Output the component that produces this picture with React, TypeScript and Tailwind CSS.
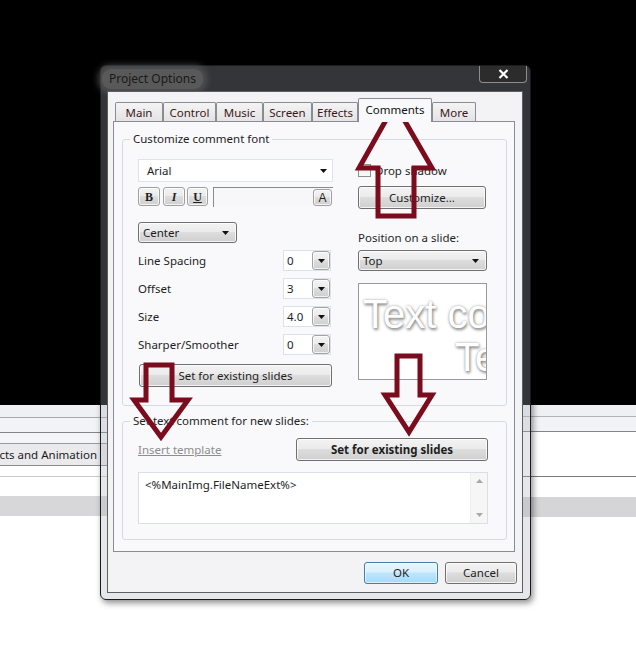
import React from 'react';

const winBtn =
  'rounded-[3px] border border-[#707070] bg-[linear-gradient(#f3f3f3,#ebebeb_45%,#dddddd_50%,#cfcfcf)] shadow-[inset_0_0_0_1px_rgba(255,255,255,0.75)]';

const Caret = () => (
  <svg width="7" height="4" viewBox="0 0 7 4" className="shrink-0">
    <path d="M0 0h7L3.5 4z" fill="#111" />
  </svg>
);

const tabs = [
  { label: 'Main', w: 'w-[48px]' },
  { label: 'Control', w: 'w-[53px]' },
  { label: 'Music', w: 'w-[47px]' },
  { label: 'Screen', w: 'w-[49px]' },
  { label: 'Effects', w: 'w-[46px]' },
  { label: 'Comments', w: 'w-[74px]', active: true },
  { label: 'More', w: 'w-[44px]' },
];

const spinRows = [
  { label: 'Line Spacing', value: '0' },
  { label: 'Offset', value: '3' },
  { label: 'Size', value: '4.0' },
  { label: 'Sharper/Smoother', value: '0' },
];

const SpinCombo = ({ value }: { value: string }) => (
  <div className="flex h-[21px] w-[48px] items-center border border-[#dbe2e8] bg-white pl-[3px]">
    <span className="flex-1">{value}</span>
    <div className={`${winBtn} flex h-[19px] w-[18px] items-center justify-center rounded-[2px] border-[#a3a3a3]`}>
      <Caret />
    </div>
  </div>
);

const Background = () => (
  <div className="flex min-h-[672px] flex-col bg-white">
    <div className="h-[405px] bg-black" />
    <div className="flex flex-1">
      <div className="w-[320px]">
        <div className="h-[13px] border-b border-[#a9a9a9] bg-[#eef0f4]" />
        <div className="h-[15px] border-b border-[#858585] bg-[#f2f3f6]" />
        <div className="h-[11px] border-b border-[#9a9a9a] bg-[#f4f5f8]" />
        <div className="flex h-[22px] items-center justify-end overflow-hidden whitespace-nowrap border-b border-[#8c8c8c] bg-[#eaeaed] pr-[223px] text-[11.5px] text-[#1a1a1a]">
          <span>Effects and Animation</span>
        </div>
        <div className="h-[11px] border-b border-[#c9c9c9]" />
        <div className="h-[19px]" />
        <div className="h-[20px] bg-[#d7d7d9]" />
      </div>
      <div className="flex-1">
        <div className="h-[12px] border-b border-[#b3b3b3] bg-[#eef0f4]" />
        <div className="h-[15px] border-b border-[#858585] bg-[#f2f3f6]" />
        <div className="h-[45px] border-b border-[#7a7a7a]" />
        <div className="h-[20px]" />
        <div className="h-[20px] bg-[#d5d5d7]" />
      </div>
    </div>
  </div>
);

const Arrows = () => (
  <svg
    className="pointer-events-none absolute left-0 top-0"
    width="636"
    height="672"
    viewBox="0 0 636 672"
    fill="none"
    stroke="#7b0c1d"
    strokeWidth="5"
  >
    <polygon points="395,104 432,168 414,168 414,216 378,216 378,168 359,168" />
    <polygon points="146,365 172,365 172,400 188,400 161,437 134,400 146,400" />
    <polygon points="397,356 420,356 420,395 432,395 409,432 385,395 397,395" />
  </svg>
);

const Dialog = () => (
  <div className="absolute left-[100px] top-[65px] flex h-[535px] w-[431px] flex-col rounded-[6px] border border-[#1b1b1b] bg-[rgba(170,175,185,0.3)] shadow-[2px_3px_6px_rgba(0,0,0,0.45)]">
    {/* title bar */}
    <div className="flex h-[25px] items-start justify-between pl-[1px]">
      <div className="mt-[3px] rounded-[9px] bg-[#595959] px-[7px] py-[1px] text-[12px] text-[#1a1a1a] shadow-[0_0_6px_4px_rgba(89,89,89,0.75)]">
        Project Options
      </div>
      <div className="mr-[3px] flex h-[17px] w-[48px] items-center justify-center rounded-b-[4px] border border-t-0 border-[#8d8d8d] bg-[#2c2c2c]">
        <svg width="11" height="10" viewBox="0 0 11 10">
          <path d="M1.5 1l8 8M9.5 1l-8 8" stroke="#fff" strokeWidth="2.2" />
        </svg>
      </div>
    </div>

    {/* client */}
    <div className="mb-[6px] ml-[6px] mr-[7px] flex-1 border border-[#5f5f5f] bg-[#f3f3f5] px-[5px] pt-[7px]">
      <div className="ml-[2px] flex h-[22px] items-end">
        {tabs.map((t) =>
          t.active ? (
            <div
              key={t.label}
              className={`${t.w} relative z-10 -mb-px flex h-[24px] items-start justify-center rounded-t-[2px] border border-b-0 border-[#898c95] bg-[#f9f9fb] pt-[2px] text-[#111]`}
            >
              {t.label}
            </div>
          ) : (
            <div
              key={t.label}
              className={`${t.w} flex h-[19px] items-center justify-center rounded-t-[2px] border border-b-0 border-[#898c95] bg-[linear-gradient(#f4f4f4,#e3e3e3)] pt-[2px] text-[#3a1822]`}
            >
              {t.label}
            </div>
          )
        )}
      </div>

      <div className="h-[431px] w-[402px] border border-[#898c95] bg-[#f9f9fb] px-[8px] pt-[9px]">
        {/* group 1 */}
        <fieldset className="h-[275px] w-[385px] rounded-[3px] border border-[#d3dce3]">
          <legend className="ml-[7px] px-[3px] leading-[16px]">Customize comment font</legend>
          <div className="flex gap-[25px] px-[15px]">
            <div className="w-[195px]">
              <div className="mt-[12px] flex h-[23px] items-center justify-between border border-[#dde4ea] bg-white pl-[8px] pr-[5px]">
                <span>Arial</span>
                <Caret />
              </div>
              <div className="mt-[5px] flex h-[20px] items-start">
                <div className={`${winBtn} flex h-[19px] w-[22px] items-center justify-center rounded-[2px] border-[#a0a0a0] font-['Liberation_Serif',serif] text-[12px] font-bold`}>
                  B
                </div>
                <div className={`${winBtn} ml-[3px] flex h-[19px] w-[22px] items-center justify-center rounded-[2px] border-[#a0a0a0] font-['Liberation_Serif',serif] text-[12px] font-bold italic`}>
                  I
                </div>
                <div className={`${winBtn} ml-[2px] flex h-[19px] w-[21px] items-center justify-center rounded-[2px] border-[#a0a0a0] font-['Liberation_Serif',serif] text-[12px] font-bold underline`}>
                  U
                </div>
                <div className="ml-[5px] flex h-[20px] flex-1 items-start justify-end border-l border-t border-[#8a8a8a] bg-[#f7f7f9] pr-[1px] pt-[1px]">
                  <div className={`${winBtn} flex h-[17px] w-[19px] items-center justify-center rounded-[2px] border-[#a0a0a0] font-['Liberation_Sans',sans-serif] text-[12px]`}>
                    A
                  </div>
                </div>
              </div>
              <div className={`${winBtn} mt-[15px] flex h-[21px] w-[99px] items-center justify-between pl-[4px] pr-[7px]`}>
                <span>Center</span>
                <Caret />
              </div>
              {spinRows.map((r) => (
                <div key={r.label} className="mt-[7px] flex h-[21px] w-[193px] items-center justify-between">
                  <span>{r.label}</span>
                  <SpinCombo value={r.value} />
                </div>
              ))}
              <div className={`${winBtn} ml-[1px] mt-[9px] flex h-[23px] w-[193px] items-center justify-center`}>
                Set for existing slides
              </div>
            </div>

            <div className="w-[129px]">
              <div className="mt-[17px] flex h-[13px] items-center gap-[4px]">
                <div className="h-[13px] w-[13px] border border-[#8f8f8f] bg-[linear-gradient(#e6e6e6,#fafafa)]" />
                <span>Drop shadow</span>
              </div>
              <div className={`${winBtn} mt-[9px] flex h-[23px] w-[128px] items-center justify-center`}>
                Customize...
              </div>
              <div className="mt-[21px] leading-[16px]">Position on a slide:</div>
              <div className={`${winBtn} mt-[4px] flex h-[21px] items-center justify-between pl-[4px] pr-[7px]`}>
                <span>Top</span>
                <Caret />
              </div>
              <div className="mt-[12px] h-[97px] overflow-hidden border border-[#9a9a9a] bg-white pt-[10px] font-['Liberation_Sans',sans-serif] text-[40px] leading-[40px] text-white [text-shadow:1px_2px_3px_#8c8c8c,0_0_3px_#a8a8a8]">
                <div className="whitespace-nowrap pl-[4px]">Text comment</div>
                <div className="mt-[3px] whitespace-nowrap pl-[96px]">Text comment</div>
              </div>
            </div>
          </div>
        </fieldset>

        {/* group 2 */}
        <fieldset className="mt-[7px] h-[127px] w-[385px] rounded-[3px] border border-[#d3dce3]">
          <legend className="ml-[7px] px-[3px] leading-[16px]">Set text comment for new slides:</legend>
          <div className="px-[15px]">
            <div className="mt-[9px] flex h-[23px] items-center justify-between pr-[3px]">
              <span className="text-[#8d8d8d] underline">Insert template</span>
              <div className={`${winBtn} flex h-[23px] w-[192px] items-center justify-center font-bold`}>
                Set for existing slides
              </div>
            </div>
            <div className="mt-[11px] flex h-[52px] w-[350px] border border-[#d9dfe5] bg-white">
              <div className="flex-1 pl-[6px] pt-[3px]">&lt;%MainImg.FileNameExt%&gt;</div>
              <div className="flex w-[17px] flex-col items-center justify-between border-l border-[#eeeeee] bg-[#f6f6f7] py-[6px]">
                <svg width="7" height="4" viewBox="0 0 7 4">
                  <path d="M0 4h7L3.5 0z" fill="#a9a9a9" />
                </svg>
                <svg width="7" height="4" viewBox="0 0 7 4">
                  <path d="M0 0h7L3.5 4z" fill="#a9a9a9" />
                </svg>
              </div>
            </div>
          </div>
        </fieldset>
      </div>

      <div className="mt-[10px] flex justify-end gap-[7px]">
        <div className="flex h-[22px] w-[74px] items-center justify-center rounded-[3px] border border-[#3c7fb1] bg-[linear-gradient(#eaf6fd,#d9f0fc_45%,#bee6fd_50%,#a7d9f5)] shadow-[inset_0_0_0_1px_rgba(255,255,255,0.6)]">
          OK
        </div>
        <div className={`${winBtn} flex h-[22px] w-[72px] items-center justify-center`}>Cancel</div>
      </div>
    </div>
  </div>
);

export default function App() {
  return (
    <div className="relative h-[672px] w-[636px] overflow-hidden font-['Noto_Sans',sans-serif] text-[11.5px] text-[#1e1e1e]">
      <Background />
      <Dialog />
      <Arrows />
    </div>
  );
}
